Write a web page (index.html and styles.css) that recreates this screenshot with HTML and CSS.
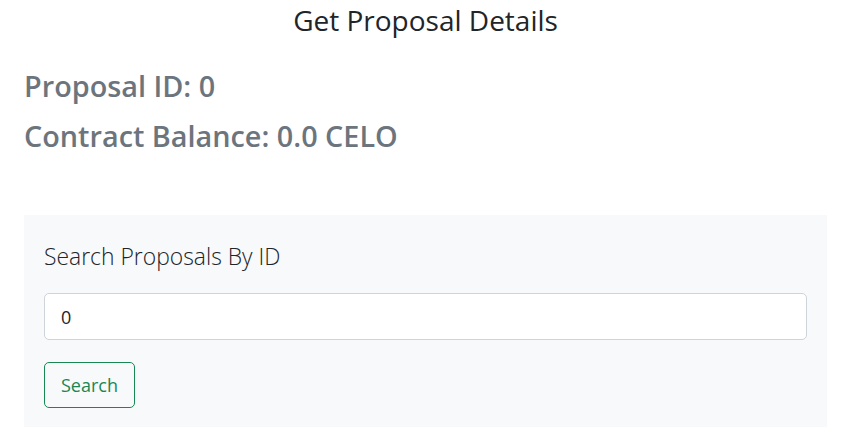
FILE: index.html
```html
<!DOCTYPE html>
<html lang="en">
<head>
<meta charset="utf-8">
<title>Get Proposal Details</title>
<link rel="stylesheet" href="styles.css">
</head>
<body>
<main class="page">
  <h2 class="title">Get Proposal Details</h2>
  <h3 class="stat stat-first">Proposal ID: 0</h3>
  <h3 class="stat">Contract Balance: 0.0 CELO</h3>
  <section class="panel">
    <label class="panel-label" for="pid">Search Proposals By ID</label>
    <input id="pid" class="field" type="text" value="0">
    <button class="btn-search" type="button">Search</button>
  </section>
</main>
</body>
</html>
```

FILE: styles.css
```css
* { box-sizing: border-box; }
html, body { margin: 0; padding: 0; background: #fff; }
body {
  font-family: "Open Sans", "Noto Sans", "DejaVu Sans", sans-serif;
  color: #212529;
}
.page {
  padding: 3px 21px 0 24px;
}
.title {
  margin: 0;
  text-align: center;
  font-size: 28px;
  font-weight: 400;
  line-height: 34px;
  color: #212529;
}
.stat {
  margin: 16px 0 0;
  font-size: 28.8px;
  font-weight: 600;
  line-height: 34px;
  color: #6c757d;
}
.stat-first { margin-top: 32px; }
.panel {
  margin-top: 62px;
  background: #f8f9fa;
  padding: 25px 20px 19px;
  display: flex;
  flex-direction: column;
  align-items: flex-start;
}
.panel-label {
  font-size: 22.9px;
  font-weight: 300;
  line-height: 34px;
  color: #212529;
  margin-bottom: 19px;
}
.field {
  width: 100%;
  height: 47px;
  padding: 0 16px;
  font-family: inherit;
  font-size: 18px;
  color: #212529;
  background: #fff;
  border: 1px solid #ced4da;
  border-radius: 5px;
  outline: none;
}
.btn-search {
  margin-top: 22px;
  height: 46px;
  padding: 0 16px;
  font-family: inherit;
  font-size: 18px;
  color: #198754;
  background: transparent;
  border: 1px solid #198754;
  border-radius: 5px;
}
```
